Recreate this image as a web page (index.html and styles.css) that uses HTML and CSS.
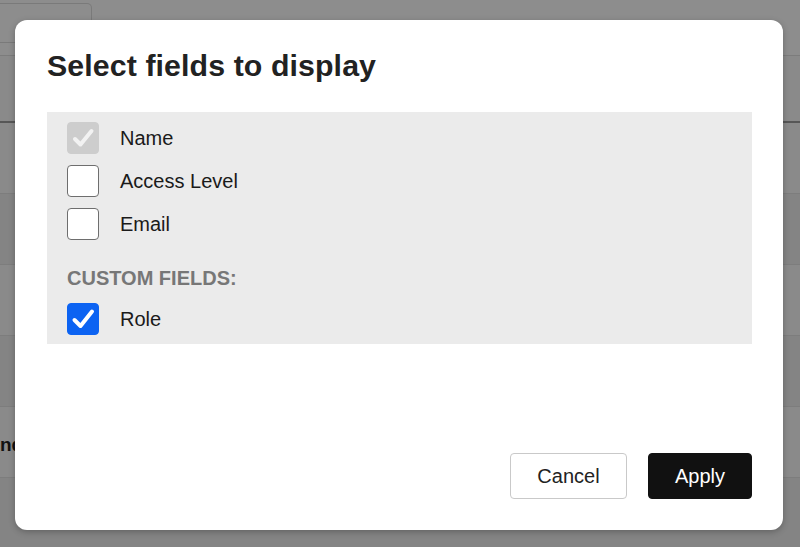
FILE: index.html
```html
<!DOCTYPE html>
<html>
<head>
<meta charset="utf-8">
<link rel="stylesheet" href="styles.css">
</head>
<body>
<div class="page">
  <div class="topbar"><div class="ghost-btn"></div></div>
  <div class="band head"></div>
  <div class="band light"></div>
  <div class="band dark"></div>
  <div class="band light"></div>
  <div class="band dark"></div>
  <div class="band light"><span class="cell-text">nd</span></div>
  <div class="band dark last"></div>
</div>

<div class="modal">
  <h1 class="title">Select fields to display</h1>
  <div class="panel">
    <label class="row">
      <span class="box disabled"><svg viewBox="0 0 32 32" width="32" height="32"><path d="M8 17 L13.5 22.5 L24.5 9" fill="none" stroke="#f2f2f2" stroke-width="4" stroke-linecap="round" stroke-linejoin="round"/></svg></span>
      <span class="label">Name</span>
    </label>
    <label class="row">
      <span class="box"></span>
      <span class="label">Access Level</span>
    </label>
    <label class="row">
      <span class="box"></span>
      <span class="label">Email</span>
    </label>
    <div class="section">CUSTOM FIELDS:</div>
    <label class="row">
      <span class="box checked"><svg viewBox="0 0 32 32" width="32" height="32"><path d="M7.5 17 L13.5 23 L25 8.5" fill="none" stroke="#ffffff" stroke-width="4" stroke-linecap="round" stroke-linejoin="round"/></svg></span>
      <span class="label">Role</span>
    </label>
  </div>
  <div class="footer">
    <button class="btn cancel">Cancel</button>
    <button class="btn apply">Apply</button>
  </div>
</div>
</body>
</html>
```
FILE: styles.css
```css
html, body {
  margin: 0;
  padding: 0;
  height: 100%;
  overflow: hidden;
}
body {
  font-family: "Liberation Sans", Arial, Helvetica, sans-serif;
  background: #868686;
}
.page {
  display: flex;
  flex-direction: column;
  height: 547px;
}
.topbar {
  height: 56px;
  background: #8d8d8d;
  border-bottom: 1px solid #7c7c7c;
  padding-top: 3px;
  box-sizing: border-box;
}
.ghost-btn {
  width: 92px;
  height: 40px;
  border: 1px solid #7a7a7a;
  border-left: none;
  border-radius: 0 5px 5px 0;
  box-sizing: border-box;
}
.band {
  height: 71px;
  border-bottom: 1px solid #7d7d7d;
  box-sizing: border-box;
  display: flex;
  align-items: center;
}
.band.head {
  height: 67px;
  background: #8a8a8a;
  border-bottom: 2px solid #575757;
}
.band.light { background: #8a8a8a; }
.band.dark { background: #848484; }
.band.last { flex: 1; border-bottom: none; }
.cell-text {
  font-weight: bold;
  font-size: 19px;
  color: #111;
  margin-top: 6px;
}

.modal {
  position: absolute;
  left: 15px;
  top: 20px;
  width: 768px;
  height: 510px;
  background: #fff;
  border-radius: 12px;
  box-shadow: 0 2px 6px rgba(0, 0, 0, 0.25);
  box-sizing: border-box;
  padding: 28px 31px 31px 32px;
  display: flex;
  flex-direction: column;
}
.title {
  margin: 0;
  font-size: 30.3px;
  line-height: 36px;
  font-weight: bold;
  color: #222;
  letter-spacing: 0.1px;
}
.panel {
  margin-top: 28px;
  background: #ebebeb;
  padding: 10px 20px 9px 20px;
  display: flex;
  flex-direction: column;
  gap: 11px;
}
.row {
  display: flex;
  align-items: center;
  gap: 21px;
  height: 32px;
}
.box {
  width: 32px;
  height: 32px;
  box-sizing: border-box;
  border: 1px solid #6e6e6e;
  border-radius: 4px;
  background: #fff;
  flex: none;
  display: flex;
}
.box svg { display: block; margin: -1px; }
.box.disabled {
  background: #cdcdcd;
  border-color: #cdcdcd;
}
.box.checked {
  background: #0c63f2;
  border-color: #0c63f2;
}
.label {
  font-size: 20px;
  color: #1a1a1a;
  margin-top: 1px;
}
.section {
  margin-top: 16px;
  font-size: 20px;
  line-height: 22px;
  font-weight: bold;
  color: #777;
}
.section + .row { margin-top: 3px; }
.footer {
  margin-top: auto;
  display: flex;
  justify-content: flex-end;
  gap: 21px;
}
.btn {
  font-family: "Liberation Sans", Arial, Helvetica, sans-serif;
  font-size: 20px;
  height: 46px;
  border-radius: 4px;
  box-sizing: border-box;
  padding: 0;
}
.cancel {
  width: 117px;
  background: #fff;
  border: 1px solid #c9c9c9;
  color: #222;
}
.apply {
  width: 104px;
  background: #111;
  border: 1px solid #111;
  color: #fff;
}
```
